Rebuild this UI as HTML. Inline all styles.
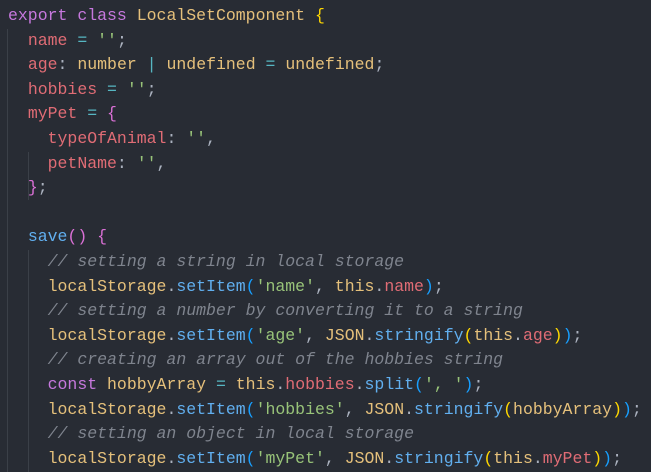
<!DOCTYPE html>
<html><head><meta charset="utf-8"><style>
html,body{margin:0;padding:0;background:#282c34;width:651px;height:472px;overflow:hidden}
pre{margin:0;position:absolute;left:8px;top:4px;font-family:"Liberation Mono",monospace;font-size:16.5px;line-height:24.6px;color:#abb2bf;white-space:pre}
.k{color:#c678dd}.y{color:#e5c07b}.r{color:#e06c75}.o{color:#56b6c2}.s{color:#98c379}.c{color:#7f848e;font-style:italic}.f{color:#61afef}
.b1{color:#ffd700}.b2{color:#da70d6}.b3{color:#179fff}
.g{position:absolute;width:1px;background:#3b4048}
</style></head><body>
<div class="g" style="left:7px;top:29px;height:443px"></div>
<div class="g" style="left:28px;top:152px;height:48px"></div>
<div class="g" style="left:28px;top:250px;height:222px"></div>
<pre><span class="k">export</span> <span class="k">class</span> <span class="y">LocalSetComponent</span> <span class="b1">{</span>
  <span class="r">name</span> <span class="o">=</span> <span class="s">''</span>;
  <span class="r">age</span>: <span class="y">number</span> <span class="o">|</span> <span class="y">undefined</span> <span class="o">=</span> <span class="y">undefined</span>;
  <span class="r">hobbies</span> <span class="o">=</span> <span class="s">''</span>;
  <span class="r">myPet</span> <span class="o">=</span> <span class="b2">{</span>
    <span class="r">typeOfAnimal</span>: <span class="s">''</span>,
    <span class="r">petName</span>: <span class="s">''</span>,
  <span class="b2">}</span>;

  <span class="f">save</span><span class="b2">()</span> <span class="b2">{</span>
    <span class="c">// setting a string in local storage</span>
    <span class="y">localStorage</span>.<span class="f">setItem</span><span class="b3">(</span><span class="s">'name'</span>, <span class="y">this</span>.<span class="r">name</span><span class="b3">)</span>;
    <span class="c">// setting a number by converting it to a string</span>
    <span class="y">localStorage</span>.<span class="f">setItem</span><span class="b3">(</span><span class="s">'age'</span>, <span class="y">JSON</span>.<span class="f">stringify</span><span class="b1">(</span><span class="y">this</span>.<span class="r">age</span><span class="b1">)</span><span class="b3">)</span>;
    <span class="c">// creating an array out of the hobbies string</span>
    <span class="k">const</span> <span class="y">hobbyArray</span> <span class="o">=</span> <span class="y">this</span>.<span class="r">hobbies</span>.<span class="f">split</span><span class="b3">(</span><span class="s">', '</span><span class="b3">)</span>;
    <span class="y">localStorage</span>.<span class="f">setItem</span><span class="b3">(</span><span class="s">'hobbies'</span>, <span class="y">JSON</span>.<span class="f">stringify</span><span class="b1">(</span><span class="y">hobbyArray</span><span class="b1">)</span><span class="b3">)</span>;
    <span class="c">// setting an object in local storage</span>
    <span class="y">localStorage</span>.<span class="f">setItem</span><span class="b3">(</span><span class="s">'myPet'</span>, <span class="y">JSON</span>.<span class="f">stringify</span><span class="b1">(</span><span class="y">this</span>.<span class="r">myPet</span><span class="b1">)</span><span class="b3">)</span>;</pre>
</body></html>
